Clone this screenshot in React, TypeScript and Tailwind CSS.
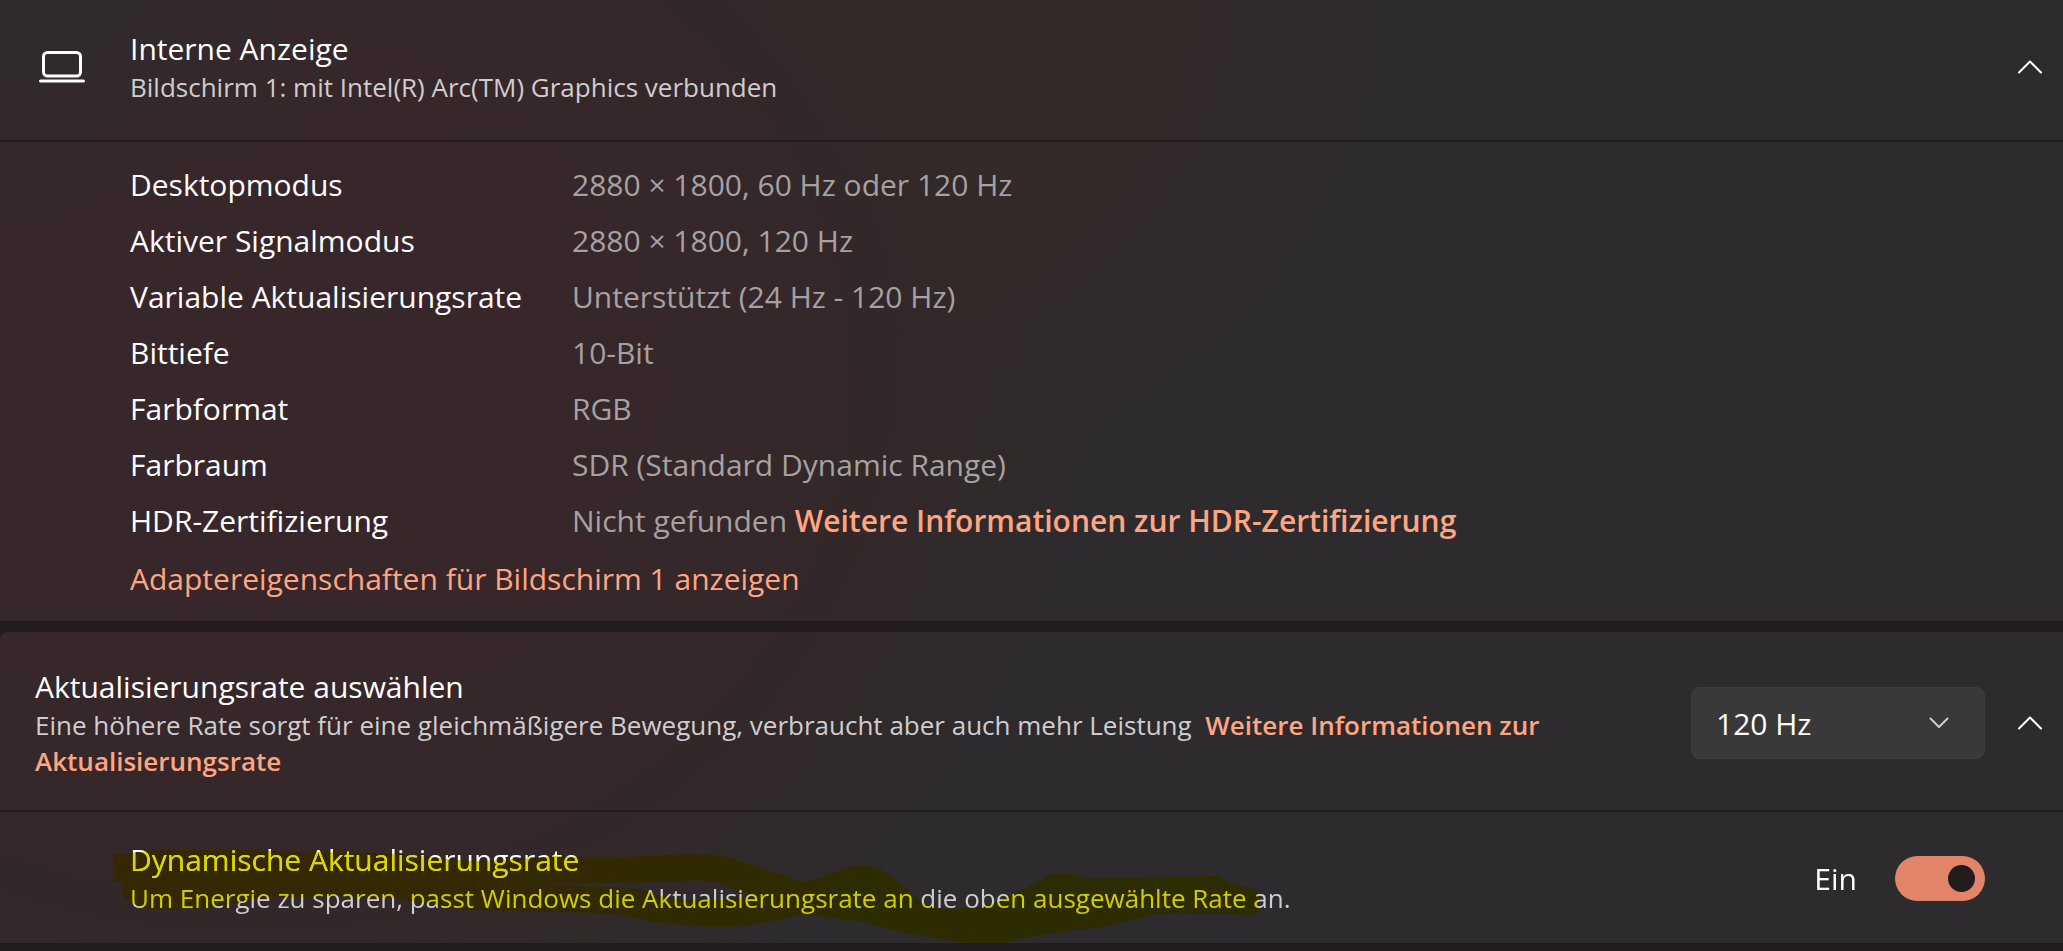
import React, { useState } from 'react';

const CARD_BG =
  'bg-[#2d2b2e] bg-fixed bg-[radial-gradient(ellipse_18%_24%_at_0%_0%,#2e2b2e_0%,rgba(46,43,46,0)_100%),radial-gradient(ellipse_42%_78%_at_12%_40%,#38262a_0%,#36272a_50%,#332829_72%,rgba(50,41,41,0.7)_84%,rgba(45,43,46,0)_100%),radial-gradient(ellipse_36%_60%_at_34%_0%,#342a28_0%,#332928_60%,rgba(48,42,42,0.6)_82%,rgba(45,43,46,0)_100%)]';

const details = [
  { label: 'Desktopmodus', value: '2880 × 1800, 60 Hz oder 120 Hz' },
  { label: 'Aktiver Signalmodus', value: '2880 × 1800, 120 Hz' },
  { label: 'Variable Aktualisierungsrate', value: 'Unterstützt (24 Hz - 120 Hz)' },
  { label: 'Bittiefe', value: '10-Bit' },
  { label: 'Farbformat', value: 'RGB' },
  { label: 'Farbraum', value: 'SDR (Standard Dynamic Range)' },
  { label: 'HDR-Zertifizierung', value: 'Nicht gefunden', link: 'Weitere Informationen zur HDR-Zertifizierung' },
];

const LaptopIcon = () => (
  <svg width="46" height="32" viewBox="0 0 46 32" fill="none" stroke="currentColor" strokeWidth="3" aria-hidden="true">
    <rect x="4.5" y="1.5" width="37" height="23.5" rx="4" />
    <path d="M1.5 30h43" strokeLinecap="round" />
  </svg>
);

const ChevronUp = () => (
  <svg width="24" height="14" viewBox="0 0 24 14" fill="none" stroke="currentColor" strokeWidth="2" aria-hidden="true">
    <path d="M1 12.5 12 1.5l11 11" strokeLinecap="round" strokeLinejoin="round" />
  </svg>
);

const ChevronDown = () => (
  <svg width="20" height="12" viewBox="0 0 20 12" fill="none" stroke="currentColor" strokeWidth="2" aria-hidden="true">
    <path d="m1.5 1.5 8.5 8.5 8.5-8.5" strokeLinecap="round" strokeLinejoin="round" />
  </svg>
);

// Freehand marker stroke over the dynamic refresh rate texts
const Highlight = () => (
  <svg
    className="pointer-events-none absolute left-[113px] top-0 mix-blend-darken"
    width="1145"
    height="133"
    viewBox="113 810 1145 133"
    aria-hidden="true"
  >
    <path
      fill="#dcd600"
      fillRule="evenodd"
      d="M113 855 L140 852 Q155 850 171 850 L238 850 L317 852 L377 853 L416 855 Q440 858 456 860 Q476 862 519 859 L555 856 Q580 857 610 858 L646 856 Q680 854 708 855 Q722 855 733 859 L761 868 L805 882 L822 877 L847 868 Q863 864 875 867 Q886 871 900 883 L916 897 Q922 904 929 905 Q937 909 945 909 L973 908 Q986 907 998 902 L1018 892 L1043 879 Q1050 874 1053 874 L1071 874 Q1085 878 1100 878 L1149 877 L1218 876 Q1226 882 1235 884 L1257 890 V916 L1227 914 Q1210 913 1190 913 Q1165 912 1149 916 L1108 926 L1080 930 L1035 936 L1002 943 L969 943 L945 940 L904 933 L863 922 L822 916 L808 914 L761 923 Q740 927 720 927 Q690 926 661 923 L626 916 Q610 913 594 913 L519 911 L472 910 Q450 909 436 905 L396 898 L337 896 L306 897 L258 897 Q240 904 219 906 Q190 910 167 910 L148 909 Q130 904 123 897 V882 H113 Z
         M533 883 Q555 884 574 883 L634 883 L681 881 Q695 880 708 881 Q718 882 724 885 L745 893 L757 897 Q742 897 724 900 L693 900 Q680 900 665 897 L646 891 Q630 887 606 887 L547 885 Z"
    />
  </svg>
);

export default function App() {
  const [rate, setRate] = useState('120');
  const [dynamic, setDynamic] = useState(true);

  return (
    <main className="flex min-h-screen flex-col gap-[11px] bg-[#231c1e] font-['Open_Sans','Noto_Sans',sans-serif] text-[30px] text-white">
      {/* Display information */}
      <section className={CARD_BG}>
        <header className="flex items-center pb-[35px] pl-[39px] pr-[21px] pt-[29px]">
          <LaptopIcon />
          <div className="ml-[45px] flex-1">
            <h2 className="leading-10">Interne Anzeige</h2>
            <p className="text-[26px] leading-9 text-[#d0cdce]">Bildschirm 1: mit Intel(R) Arc(TM) Graphics verbunden</p>
          </div>
          <button type="button" aria-label="Interne Anzeige reduzieren">
            <ChevronUp />
          </button>
        </header>

        <div className="border-t-2 border-[#231c1e] pb-3 pl-[130px] pt-[15px]">
          <table className="text-left leading-[56px]">
            <tbody>
              {details.map((row) => (
                <tr key={row.label}>
                  <th scope="row" className="w-[442px] p-0 font-normal">{row.label}</th>
                  <td className="p-0 text-[#a6a1a2]">
                    {row.value}
                    {row.link && (
                      <>
                        {' '}
                        <a href="#hdr" className="font-semibold text-[#ffa582]">{row.link}</a>
                      </>
                    )}
                  </td>
                </tr>
              ))}
            </tbody>
          </table>
          <a href="#adapter" className="inline-block align-top leading-[60px] text-[#ffa582]">
            Adaptereigenschaften für Bildschirm 1 anzeigen
          </a>
        </div>
      </section>

      {/* Refresh rate */}
      <section className={`rounded-tl-lg ${CARD_BG}`}>
        <header className="flex items-center pb-[31px] pl-[35px] pr-[21px] pt-[35px]">
          <div className="flex-1">
            <h2 className="leading-10">
              <label htmlFor="rate">Aktualisierungsrate auswählen</label>
            </h2>
            <p className="max-w-[1560px] text-[26px] leading-9 text-[#d0cdce]">
              Eine höhere Rate sorgt für eine gleichmäßigere Bewegung, verbraucht aber auch mehr Leistung&nbsp;{' '}
              <a href="#rate-info" className="font-semibold text-[#ffa582]">
                Weitere Informationen zur <br />
                Aktualisierungsrate
              </a>
            </p>
          </div>
          <div className="relative ml-6 w-[294px]">
            <select
              id="rate"
              value={rate}
              onChange={(e) => setRate(e.target.value)}
              className="block h-[72px] w-full appearance-none rounded-[9px] border border-[#3d3d3d] bg-[#393939] pl-6 text-white"
            >
              <option value="120">120 Hz</option>
              <option value="60">60 Hz</option>
            </select>
            <span className="pointer-events-none absolute right-9 top-[30px] text-[#d0cdce]">
              <ChevronDown />
            </span>
          </div>
          <button type="button" aria-label="Aktualisierungsrate reduzieren" className="ml-[33px]">
            <ChevronUp />
          </button>
        </header>

        <div className="relative isolate">
          <div className={`flex items-center border-t-2 border-[#231c1e] pb-[27px] pl-[130px] pr-[78px] pt-7 ${CARD_BG}`}>
            <label htmlFor="dynamic" className="flex-1">
              <span className="block leading-10">Dynamische Aktualisierungsrate</span>
              <span className="block text-[26px] leading-9 text-[#d0cdce]">
                Um Energie zu sparen, passt Windows die Aktualisierungsrate an die oben ausgewählte Rate an.
              </span>
            </label>
            <span className="mr-[38px]">{dynamic ? 'Ein' : 'Aus'}</span>
            <input
              id="dynamic"
              type="checkbox"
              role="switch"
              checked={dynamic}
              onChange={(e) => setDynamic(e.target.checked)}
              className="flex h-[45px] w-[90px] appearance-none items-center rounded-full bg-[#e28468] px-[10px] before:size-[27px] before:rounded-full before:bg-[#231c1e] checked:justify-end"
            />
          </div>
          <Highlight />
        </div>
      </section>
    </main>
  );
}
